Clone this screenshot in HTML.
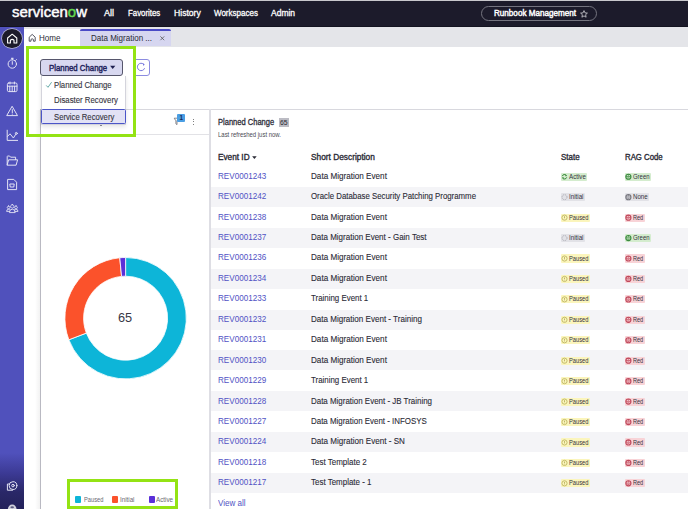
<!DOCTYPE html>
<html><head><meta charset="utf-8">
<style>
html,body{margin:0;padding:0;}
body{width:688px;height:509px;overflow:hidden;position:relative;background:#fff;font-family:"Liberation Sans",sans-serif;}
.a{position:absolute;}
.t{position:absolute;line-height:1;white-space:nowrap;transform-origin:0 0;}
svg{overflow:visible;}
</style></head><body>
<div class="a" style="left:0;top:0;width:688px;height:1px;background:#c8c8cc"></div>
<div class="a" style="left:0;top:1px;width:688px;height:26px;background:#1c1b2b"></div>
<div class="t" style="left:12.30px;top:4.83px;font-size:14.5px;color:#fff;transform:scaleX(1.0336);-webkit-text-stroke:0.45px #fff;">servicen<span style="color:#62d84e;-webkit-text-stroke-color:#62d84e">o</span>w</div>
<div class="t" style="left:103.90px;top:8.58px;font-size:9.0px;color:#fff;transform:scaleX(1.0084);-webkit-text-stroke:0.3px #fff;">All</div>
<div class="t" style="left:127.50px;top:8.58px;font-size:9.0px;color:#fff;transform:scaleX(0.8726);-webkit-text-stroke:0.3px #fff;">Favorites</div>
<div class="t" style="left:173.50px;top:8.58px;font-size:9.0px;color:#fff;transform:scaleX(0.9566);-webkit-text-stroke:0.3px #fff;">History</div>
<div class="t" style="left:213.80px;top:8.58px;font-size:9.0px;color:#fff;transform:scaleX(0.8894);-webkit-text-stroke:0.3px #fff;">Workspaces</div>
<div class="t" style="left:270.80px;top:8.58px;font-size:9.0px;color:#fff;transform:scaleX(0.9445);-webkit-text-stroke:0.3px #fff;">Admin</div>
<div class="a" style="left:481.2px;top:5.7px;width:116px;height:15.7px;border:1px solid #74747f;border-radius:9px;box-sizing:border-box"></div>
<div class="t" style="left:494.00px;top:8.68px;font-size:9.0px;color:#fff;transform:scaleX(0.9005);-webkit-text-stroke:0.45px #fff;">Runbook Management</div>
<svg class="a" style="left:579.5px;top:9.5px" width="8" height="8" viewBox="0 0 8 8"><path d="M4 0.6 L5 2.9 L7.4 3.1 L5.6 4.7 L6.1 7.2 L4 5.9 L1.9 7.2 L2.4 4.7 L0.6 3.1 L3 2.9 Z" fill="none" stroke="#d0d0d6" stroke-width="0.8" stroke-linejoin="round"/></svg>
<div class="a" style="left:0;top:27px;width:24px;height:482px;background:linear-gradient(#5051bc 0px,#5051bc 426px,#3b3993 447px,#2a2868 465px,#23215a 482px)"></div>
<div class="a" style="left:2.4px;top:28.9px;width:19.6px;height:19.6px;border-radius:50%;background:#1c1b2b;box-shadow:0 0 0 0.7px #b8b8d8"></div>
<svg class="a" style="left:0;top:0" width="24" height="509" viewBox="0 0 24 509"><g fill="none" stroke="#e2e2f4" stroke-width="1" stroke-linejoin="round" stroke-linecap="round"><path d="M7.6 43 L7.6 38 L12.2 34.2 L16.8 38 L16.8 43 L14 43 L14 40.2 Q12.2 38.6 10.4 40.2 L10.4 43 Z" stroke="#fff" stroke-width="1.1"/><circle cx="12.3" cy="64" r="4.2"/><path d="M12.3 58.3 L12.3 59.8 M11.4 58.3 L13.2 58.3 M12.3 61.6 L12.3 64.3 M15.6 60.4 L16.4 59.6"/><rect x="7.4" y="83" width="9.6" height="8.6" rx="1.3"/><path d="M7.4 86.2 L17 86.2 M9.8 86.2 L9.8 91.6 M12.2 86.2 L12.2 91.6 M14.6 86.2 L14.6 91.6 M10 82 L10 84 M14.4 82 L14.4 84"/><path d="M12.3 106.6 L17.5 115.6 L7.1 115.6 Z"/><path d="M12.3 109.6 L12.3 112.6 M12.3 114 L12.3 114.2"/><path d="M7.2 130.2 L7.2 140.4 L17.6 140.4"/><path d="M7.4 136.5 L10 133.8 L13.4 138 L15.6 134.5"/><circle cx="16.3" cy="133.4" r="1"/><path d="M7.2 164.8 L7.2 156.6 Q7.2 156 7.8 156 L9.6 156 L10.6 157.2 L15.6 157.2 L15.6 159.6 M7.2 164.8 L8.6 159.8 L17.6 159.8 L16.2 164.8 Z"/><path d="M8 179.4 L13.8 179.4 L16.6 182.2 L16.6 189.6 L8 189.6 Z"/><path d="M10.2 184 L14.2 184 L13.8 187 L10.6 187 Z"/><path d="M12.3 204.6 a1.75 1.75 0 1 0 0.01 0 Z M8.6 206 a1.4 1.4 0 1 0 0.01 0 Z M16 206 a1.4 1.4 0 1 0 0.01 0 Z" stroke-width="0.9"/><path d="M9.4 212.2 Q9.4 209.2 12.3 209.2 Q15.2 209.2 15.2 212.2 Z M9.6 211.4 L6.6 211.4 Q6.7 209.2 8.6 209.2 Q9.5 209.2 10 209.6 M15 211.4 L18 211.4 Q17.9 209.2 16 209.2 Q15.1 209.2 14.6 209.6" stroke-width="0.9"/><circle cx="13" cy="485.6" r="3.9"/><path d="M9.3 484 L7.4 484 L7.4 490.2 L12.6 490.2"/><circle cx="13" cy="485.6" r="1.3"/></g><ellipse cx="12.2" cy="509.5" rx="4.4" ry="5" fill="#d0d0dc"/><ellipse cx="12.2" cy="507.2" rx="1.8" ry="1" fill="#5a5a80"/></svg>
<div class="a" style="left:24px;top:27px;width:664px;height:19.5px;background:#e4e5e9"></div>
<div class="a" style="left:0;top:25.6px;width:688px;height:1.4px;background:#131320"></div>
<div class="a" style="left:24px;top:29px;width:56px;height:17.5px;background:#fff"></div>
<div class="a" style="left:80.1px;top:28.8px;width:91.1px;height:17.7px;background:#d6d6f0;border-top:2.1px solid #4a4ac6;box-sizing:border-box;border-radius:2px 2px 0 0"></div>
<svg class="a" style="left:0;top:0" width="40" height="46"><path d="M29.2 41.2 L29.2 37.2 L32.2 34.4 L35.2 37.2 L35.2 41.2 L33.4 41.2 L33.4 39.4 Q32.2 38.2 31 39.4 L31 41.2 Z" fill="none" stroke="#555560" stroke-width="1" stroke-linejoin="round"/></svg>
<div class="t" style="left:38.60px;top:33.62px;font-size:8.6px;color:#2a2a35;transform:scaleX(0.9373);">Home</div>
<div class="t" style="left:90.50px;top:33.52px;font-size:8.6px;color:#2a2a35;transform:scaleX(0.9322);">Data Migration ...</div>
<svg class="a" style="left:159.6px;top:36.4px" width="5" height="5"><path d="M0.4 0.4 L4.2 4.2 M4.2 0.4 L0.4 4.2" stroke="#555" stroke-width="0.8"/></svg>
<div class="a" style="left:133px;top:59.2px;width:16.7px;height:16.4px;border:1px solid #8c8ce0;border-radius:3px;box-sizing:border-box"></div>
<svg class="a" style="left:0;top:0" width="160" height="80"><path d="M143.8 64.4 A3.7 3.7 0 1 0 144.6 68.2" fill="none" stroke="#6a6ad8" stroke-width="0.9"/><path d="M142.6 63.2 L144.6 64.2 L143.6 66.0 Z" fill="#6a6ad8"/></svg>
<div class="a" style="left:40px;top:109px;width:648px;height:1px;background:#d8d8de"></div>
<div class="a" style="left:35px;top:110px;width:5px;height:399px;background:linear-gradient(90deg,rgba(0,0,0,0),rgba(0,0,0,0.05))"></div>
<div class="a" style="left:40px;top:109px;width:1.4px;height:400px;background:#b9b9c2"></div>
<div class="a" style="left:41px;top:134px;width:168px;height:1px;background:#e2e2e6"></div>
<div class="a" style="left:209px;top:109px;width:1.6px;height:400px;background:#dedee4"></div>
<svg class="a" style="left:0;top:0" width="200" height="130"><path d="M174.2 118.2 L178.8 118.2 L177 120.8 L177 124.6 L175.9 123.8 L175.9 120.8 Z" fill="none" stroke="#6c6c74" stroke-width="0.8" stroke-linejoin="round"/></svg>
<div class="a" style="left:177.1px;top:113.8px;width:7.9px;height:7.9px;background:#4a9ee3;border-radius:1px"></div>
<div class="t" style="left:179.50px;top:114.77px;font-size:6.3px;color:#1c2a55;font-weight:bold;">1</div>
<div class="a" style="left:192.6px;top:118.8px;width:1.3px;height:1.3px;background:#555;border-radius:50%"></div>
<div class="a" style="left:192.6px;top:121.2px;width:1.3px;height:1.3px;background:#555;border-radius:50%"></div>
<div class="a" style="left:192.6px;top:123.6px;width:1.3px;height:1.3px;background:#555;border-radius:50%"></div>
<div class="t" style="left:218.40px;top:117.74px;font-size:8.7px;color:#2c2c38;transform:scaleX(0.8682);-webkit-text-stroke:0.3px #2c2c38;">Planned Change</div>
<div class="a" style="left:278.7px;top:118.3px;width:10.1px;height:8.4px;background:#bcbcc4"></div>
<div class="t" style="left:280.30px;top:119.17px;font-size:7.0px;color:#282830;transform:scaleX(0.9747);">65</div>
<div class="t" style="left:218.40px;top:131.54px;font-size:6.8px;color:#4a4a54;transform:scaleX(0.8775);">Last refreshed just now.</div>
<div class="t" style="left:218.40px;top:152.84px;font-size:8.7px;color:#2a2a35;transform:scaleX(0.9481);-webkit-text-stroke:0.35px #2a2a35;">Event ID</div>
<svg class="a" style="left:0;top:0" width="260" height="160"><path d="M252.1 156.3 L256.7 156.3 L254.4 158.9 Z" fill="#2b2b36"/></svg>
<div class="t" style="left:310.90px;top:152.94px;font-size:8.7px;color:#2a2a35;transform:scaleX(0.9574);-webkit-text-stroke:0.35px #2a2a35;">Short Description</div>
<div class="t" style="left:561.00px;top:152.94px;font-size:8.7px;color:#2a2a35;transform:scaleX(0.9164);-webkit-text-stroke:0.35px #2a2a35;">State</div>
<div class="t" style="left:624.60px;top:152.94px;font-size:8.7px;color:#2a2a35;transform:scaleX(0.8973);-webkit-text-stroke:0.35px #2a2a35;">RAG Code</div>
<div class="t" style="left:218.40px;top:171.72px;font-size:8.6px;color:#5052c4;transform:scaleX(0.9425);">REV0001243</div>
<div class="t" style="left:311.00px;top:171.72px;font-size:8.6px;color:#2a2a35;transform:scaleX(0.9458);-webkit-text-stroke:0.1px #2a2a35;">Data Migration Event</div>
<div class="a" style="left:560.6px;top:172.70px;width:26.7px;height:8.1px;background:#d4ecce;border-radius:1px"></div>
<div class="t" style="left:568.90px;top:173.78px;font-size:6.4px;color:#34343e;transform:scaleX(0.9709);">Active</div>
<div class="a" style="left:624.5px;top:172.70px;width:26.7px;height:8.1px;background:#d4ecce;border-radius:1px"></div>
<div class="t" style="left:632.80px;top:173.78px;font-size:6.4px;color:#34343e;transform:scaleX(0.9288);">Green</div>
<div class="a" style="left:210.6px;top:186.94px;width:478px;height:20.04px;background:#f4f4f7"></div>
<div class="t" style="left:218.40px;top:192.16px;font-size:8.6px;color:#5052c4;transform:scaleX(0.9425);">REV0001242</div>
<div class="t" style="left:311.00px;top:192.16px;font-size:8.6px;color:#2a2a35;transform:scaleX(0.9114);-webkit-text-stroke:0.1px #2a2a35;">Oracle Database Security Patching Programme</div>
<div class="a" style="left:560.6px;top:193.14px;width:24px;height:8.1px;background:#e2e2e7;border-radius:1px"></div>
<div class="t" style="left:568.90px;top:194.22px;font-size:6.4px;color:#34343e;transform:scaleX(0.9717);">Initial</div>
<div class="a" style="left:624.5px;top:193.14px;width:24.6px;height:8.1px;background:#e2e2e7;border-radius:1px"></div>
<div class="t" style="left:632.80px;top:194.22px;font-size:6.4px;color:#34343e;transform:scaleX(0.9620);">None</div>
<div class="t" style="left:218.40px;top:212.60px;font-size:8.6px;color:#5052c4;transform:scaleX(0.9425);">REV0001238</div>
<div class="t" style="left:311.00px;top:212.60px;font-size:8.6px;color:#2a2a35;transform:scaleX(0.9458);-webkit-text-stroke:0.1px #2a2a35;">Data Migration Event</div>
<div class="a" style="left:560.6px;top:213.58px;width:29.1px;height:8.1px;background:#fbf5bc;border-radius:1px"></div>
<div class="t" style="left:568.90px;top:214.66px;font-size:6.4px;color:#34343e;transform:scaleX(0.8991);">Paused</div>
<div class="a" style="left:624.5px;top:213.58px;width:20px;height:8.1px;background:#f8d3d7;border-radius:1px"></div>
<div class="t" style="left:632.80px;top:214.66px;font-size:6.4px;color:#34343e;transform:scaleX(0.8692);">Red</div>
<div class="a" style="left:210.6px;top:227.82px;width:478px;height:20.04px;background:#f4f4f7"></div>
<div class="t" style="left:218.40px;top:233.04px;font-size:8.6px;color:#5052c4;transform:scaleX(0.9425);">REV0001237</div>
<div class="t" style="left:311.00px;top:233.04px;font-size:8.6px;color:#2a2a35;transform:scaleX(0.9320);-webkit-text-stroke:0.1px #2a2a35;">Data Migration Event - Gain Test</div>
<div class="a" style="left:560.6px;top:234.02px;width:24px;height:8.1px;background:#e2e2e7;border-radius:1px"></div>
<div class="t" style="left:568.90px;top:235.10px;font-size:6.4px;color:#34343e;transform:scaleX(0.9717);">Initial</div>
<div class="a" style="left:624.5px;top:234.02px;width:26.7px;height:8.1px;background:#d4ecce;border-radius:1px"></div>
<div class="t" style="left:632.80px;top:235.10px;font-size:6.4px;color:#34343e;transform:scaleX(0.9288);">Green</div>
<div class="t" style="left:218.40px;top:253.48px;font-size:8.6px;color:#5052c4;transform:scaleX(0.9425);">REV0001236</div>
<div class="t" style="left:311.00px;top:253.48px;font-size:8.6px;color:#2a2a35;transform:scaleX(0.9458);-webkit-text-stroke:0.1px #2a2a35;">Data Migration Event</div>
<div class="a" style="left:560.6px;top:254.46px;width:29.1px;height:8.1px;background:#fbf5bc;border-radius:1px"></div>
<div class="t" style="left:568.90px;top:255.54px;font-size:6.4px;color:#34343e;transform:scaleX(0.8991);">Paused</div>
<div class="a" style="left:624.5px;top:254.46px;width:20px;height:8.1px;background:#f8d3d7;border-radius:1px"></div>
<div class="t" style="left:632.80px;top:255.54px;font-size:6.4px;color:#34343e;transform:scaleX(0.8692);">Red</div>
<div class="a" style="left:210.6px;top:268.70px;width:478px;height:20.04px;background:#f4f4f7"></div>
<div class="t" style="left:218.40px;top:273.92px;font-size:8.6px;color:#5052c4;transform:scaleX(0.9425);">REV0001234</div>
<div class="t" style="left:311.00px;top:273.92px;font-size:8.6px;color:#2a2a35;transform:scaleX(0.9458);-webkit-text-stroke:0.1px #2a2a35;">Data Migration Event</div>
<div class="a" style="left:560.6px;top:274.90px;width:29.1px;height:8.1px;background:#fbf5bc;border-radius:1px"></div>
<div class="t" style="left:568.90px;top:275.98px;font-size:6.4px;color:#34343e;transform:scaleX(0.8991);">Paused</div>
<div class="a" style="left:624.5px;top:274.90px;width:20px;height:8.1px;background:#f8d3d7;border-radius:1px"></div>
<div class="t" style="left:632.80px;top:275.98px;font-size:6.4px;color:#34343e;transform:scaleX(0.8692);">Red</div>
<div class="t" style="left:218.40px;top:294.36px;font-size:8.6px;color:#5052c4;transform:scaleX(0.9425);">REV0001233</div>
<div class="t" style="left:311.00px;top:294.36px;font-size:8.6px;color:#2a2a35;transform:scaleX(0.9186);-webkit-text-stroke:0.1px #2a2a35;">Training Event 1</div>
<div class="a" style="left:560.6px;top:295.34px;width:29.1px;height:8.1px;background:#fbf5bc;border-radius:1px"></div>
<div class="t" style="left:568.90px;top:296.42px;font-size:6.4px;color:#34343e;transform:scaleX(0.8991);">Paused</div>
<div class="a" style="left:624.5px;top:295.34px;width:20px;height:8.1px;background:#f8d3d7;border-radius:1px"></div>
<div class="t" style="left:632.80px;top:296.42px;font-size:6.4px;color:#34343e;transform:scaleX(0.8692);">Red</div>
<div class="a" style="left:210.6px;top:309.58px;width:478px;height:20.04px;background:#f4f4f7"></div>
<div class="t" style="left:218.40px;top:314.80px;font-size:8.6px;color:#5052c4;transform:scaleX(0.9425);">REV0001232</div>
<div class="t" style="left:311.00px;top:314.80px;font-size:8.6px;color:#2a2a35;transform:scaleX(0.9361);-webkit-text-stroke:0.1px #2a2a35;">Data Migration Event - Training</div>
<div class="a" style="left:560.6px;top:315.78px;width:29.1px;height:8.1px;background:#fbf5bc;border-radius:1px"></div>
<div class="t" style="left:568.90px;top:316.86px;font-size:6.4px;color:#34343e;transform:scaleX(0.8991);">Paused</div>
<div class="a" style="left:624.5px;top:315.78px;width:20px;height:8.1px;background:#f8d3d7;border-radius:1px"></div>
<div class="t" style="left:632.80px;top:316.86px;font-size:6.4px;color:#34343e;transform:scaleX(0.8692);">Red</div>
<div class="t" style="left:218.40px;top:335.24px;font-size:8.6px;color:#5052c4;transform:scaleX(0.9425);">REV0001231</div>
<div class="t" style="left:311.00px;top:335.24px;font-size:8.6px;color:#2a2a35;transform:scaleX(0.9458);-webkit-text-stroke:0.1px #2a2a35;">Data Migration Event</div>
<div class="a" style="left:560.6px;top:336.22px;width:29.1px;height:8.1px;background:#fbf5bc;border-radius:1px"></div>
<div class="t" style="left:568.90px;top:337.30px;font-size:6.4px;color:#34343e;transform:scaleX(0.8991);">Paused</div>
<div class="a" style="left:624.5px;top:336.22px;width:20px;height:8.1px;background:#f8d3d7;border-radius:1px"></div>
<div class="t" style="left:632.80px;top:337.30px;font-size:6.4px;color:#34343e;transform:scaleX(0.8692);">Red</div>
<div class="a" style="left:210.6px;top:350.46px;width:478px;height:20.04px;background:#f4f4f7"></div>
<div class="t" style="left:218.40px;top:355.68px;font-size:8.6px;color:#5052c4;transform:scaleX(0.9425);">REV0001230</div>
<div class="t" style="left:311.00px;top:355.68px;font-size:8.6px;color:#2a2a35;transform:scaleX(0.9458);-webkit-text-stroke:0.1px #2a2a35;">Data Migration Event</div>
<div class="a" style="left:560.6px;top:356.66px;width:29.1px;height:8.1px;background:#fbf5bc;border-radius:1px"></div>
<div class="t" style="left:568.90px;top:357.74px;font-size:6.4px;color:#34343e;transform:scaleX(0.8991);">Paused</div>
<div class="a" style="left:624.5px;top:356.66px;width:20px;height:8.1px;background:#f8d3d7;border-radius:1px"></div>
<div class="t" style="left:632.80px;top:357.74px;font-size:6.4px;color:#34343e;transform:scaleX(0.8692);">Red</div>
<div class="t" style="left:218.40px;top:376.12px;font-size:8.6px;color:#5052c4;transform:scaleX(0.9425);">REV0001229</div>
<div class="t" style="left:311.00px;top:376.12px;font-size:8.6px;color:#2a2a35;transform:scaleX(0.9186);-webkit-text-stroke:0.1px #2a2a35;">Training Event 1</div>
<div class="a" style="left:560.6px;top:377.10px;width:29.1px;height:8.1px;background:#fbf5bc;border-radius:1px"></div>
<div class="t" style="left:568.90px;top:378.18px;font-size:6.4px;color:#34343e;transform:scaleX(0.8991);">Paused</div>
<div class="a" style="left:624.5px;top:377.10px;width:20px;height:8.1px;background:#f8d3d7;border-radius:1px"></div>
<div class="t" style="left:632.80px;top:378.18px;font-size:6.4px;color:#34343e;transform:scaleX(0.8692);">Red</div>
<div class="a" style="left:210.6px;top:391.34px;width:478px;height:20.04px;background:#f4f4f7"></div>
<div class="t" style="left:218.40px;top:396.56px;font-size:8.6px;color:#5052c4;transform:scaleX(0.9425);">REV0001228</div>
<div class="t" style="left:311.00px;top:396.56px;font-size:8.6px;color:#2a2a35;transform:scaleX(0.9245);-webkit-text-stroke:0.1px #2a2a35;">Data Migration Event - JB Training</div>
<div class="a" style="left:560.6px;top:397.54px;width:29.1px;height:8.1px;background:#fbf5bc;border-radius:1px"></div>
<div class="t" style="left:568.90px;top:398.62px;font-size:6.4px;color:#34343e;transform:scaleX(0.8991);">Paused</div>
<div class="a" style="left:624.5px;top:397.54px;width:20px;height:8.1px;background:#f8d3d7;border-radius:1px"></div>
<div class="t" style="left:632.80px;top:398.62px;font-size:6.4px;color:#34343e;transform:scaleX(0.8692);">Red</div>
<div class="t" style="left:218.40px;top:417.00px;font-size:8.6px;color:#5052c4;transform:scaleX(0.9425);">REV0001227</div>
<div class="t" style="left:311.00px;top:417.00px;font-size:8.6px;color:#2a2a35;transform:scaleX(0.9227);-webkit-text-stroke:0.1px #2a2a35;">Data Migration Event - INFOSYS</div>
<div class="a" style="left:560.6px;top:417.98px;width:29.1px;height:8.1px;background:#fbf5bc;border-radius:1px"></div>
<div class="t" style="left:568.90px;top:419.06px;font-size:6.4px;color:#34343e;transform:scaleX(0.8991);">Paused</div>
<div class="a" style="left:624.5px;top:417.98px;width:20px;height:8.1px;background:#f8d3d7;border-radius:1px"></div>
<div class="t" style="left:632.80px;top:419.06px;font-size:6.4px;color:#34343e;transform:scaleX(0.8692);">Red</div>
<div class="a" style="left:210.6px;top:432.22px;width:478px;height:20.04px;background:#f4f4f7"></div>
<div class="t" style="left:218.40px;top:437.44px;font-size:8.6px;color:#5052c4;transform:scaleX(0.9425);">REV0001224</div>
<div class="t" style="left:311.00px;top:437.44px;font-size:8.6px;color:#2a2a35;transform:scaleX(0.9406);-webkit-text-stroke:0.1px #2a2a35;">Data Migration Event - SN</div>
<div class="a" style="left:560.6px;top:438.42px;width:29.1px;height:8.1px;background:#fbf5bc;border-radius:1px"></div>
<div class="t" style="left:568.90px;top:439.50px;font-size:6.4px;color:#34343e;transform:scaleX(0.8991);">Paused</div>
<div class="a" style="left:624.5px;top:438.42px;width:20px;height:8.1px;background:#f8d3d7;border-radius:1px"></div>
<div class="t" style="left:632.80px;top:439.50px;font-size:6.4px;color:#34343e;transform:scaleX(0.8692);">Red</div>
<div class="t" style="left:218.40px;top:457.88px;font-size:8.6px;color:#5052c4;transform:scaleX(0.9425);">REV0001218</div>
<div class="t" style="left:311.00px;top:457.88px;font-size:8.6px;color:#2a2a35;transform:scaleX(0.9295);-webkit-text-stroke:0.1px #2a2a35;">Test Template 2</div>
<div class="a" style="left:560.6px;top:458.86px;width:29.1px;height:8.1px;background:#fbf5bc;border-radius:1px"></div>
<div class="t" style="left:568.90px;top:459.94px;font-size:6.4px;color:#34343e;transform:scaleX(0.8991);">Paused</div>
<div class="a" style="left:624.5px;top:458.86px;width:20px;height:8.1px;background:#f8d3d7;border-radius:1px"></div>
<div class="t" style="left:632.80px;top:459.94px;font-size:6.4px;color:#34343e;transform:scaleX(0.8692);">Red</div>
<div class="a" style="left:210.6px;top:473.10px;width:478px;height:20.04px;background:#f4f4f7"></div>
<div class="t" style="left:218.40px;top:478.32px;font-size:8.6px;color:#5052c4;transform:scaleX(0.9425);">REV0001217</div>
<div class="t" style="left:311.00px;top:478.32px;font-size:8.6px;color:#2a2a35;transform:scaleX(0.9268);-webkit-text-stroke:0.1px #2a2a35;">Test Template - 1</div>
<div class="a" style="left:560.6px;top:479.30px;width:29.1px;height:8.1px;background:#fbf5bc;border-radius:1px"></div>
<div class="t" style="left:568.90px;top:480.38px;font-size:6.4px;color:#34343e;transform:scaleX(0.8991);">Paused</div>
<div class="a" style="left:624.5px;top:479.30px;width:20px;height:8.1px;background:#f8d3d7;border-radius:1px"></div>
<div class="t" style="left:632.80px;top:480.38px;font-size:6.4px;color:#34343e;transform:scaleX(0.8692);">Red</div>
<div class="t" style="left:218.40px;top:498.82px;font-size:8.6px;color:#5052c4;transform:scaleX(0.9332);">View all</div>
<svg class="a" style="left:0;top:0" width="688" height="509"><path d="M125.60 257.50 A60.7 60.7 0 1 1 68.86 339.75 L86.34 333.11 A42.0 42.0 0 1 0 125.60 276.20 Z" fill="#0db5d8" stroke="#fff" stroke-width="0.8" stroke-linejoin="bevel"/><path d="M68.86 339.75 A60.7 60.7 0 0 1 119.78 257.78 L121.57 276.39 A42.0 42.0 0 0 0 86.34 333.11 Z" fill="#fb522b" stroke="#fff" stroke-width="0.8" stroke-linejoin="bevel"/><path d="M119.78 257.78 A60.7 60.7 0 0 1 125.60 257.50 L125.60 276.20 A42.0 42.0 0 0 0 121.57 276.39 Z" fill="#5a2fd8" stroke="#fff" stroke-width="0.8" stroke-linejoin="bevel"/></svg>
<div class="t" style="left:118.30px;top:311.77px;font-size:12.2px;color:#383846;transform:scaleX(1.0470);">65</div>
<div class="a" style="left:75.1px;top:496px;width:6.2px;height:7px;background:#0db5d8;border-radius:1px"></div>
<div class="t" style="left:83.60px;top:496.96px;font-size:6.9px;color:#6a6a72;transform:scaleX(0.8299);">Paused</div>
<div class="a" style="left:112px;top:496px;width:6.2px;height:7px;background:#fb522b;border-radius:1px"></div>
<div class="t" style="left:120.00px;top:496.96px;font-size:6.9px;color:#6a6a72;transform:scaleX(0.9010);">Initial</div>
<div class="a" style="left:148.5px;top:496px;width:6.2px;height:7px;background:#5a2fd8;border-radius:1px"></div>
<div class="t" style="left:156.40px;top:496.96px;font-size:6.9px;color:#6a6a72;transform:scaleX(0.9112);">Active</div>
<svg class="a" style="left:0;top:0" width="688" height="509"><path d="M562.3 176.15 A2.3 2.3 0 0 1 566.4 175.45 M566.7 177.35 A2.3 2.3 0 0 1 562.6 178.05" fill="none" stroke="#3a8a3c" stroke-width="1"/><path d="M565.7 174.15 L567.1 175.95 L565.1 176.15 Z M563.3 179.35 L561.9 177.55 L563.9 177.35 Z" fill="#3a8a3c"/><circle cx="628.4" cy="176.75" r="2.55" fill="none" stroke="#3c8a40" stroke-width="1.1"/><path d="M625.9 176.55 L630.9 176.55 M628.4 174.25 L628.4 175.85 M627.3 177.95 L629.5 177.95" stroke="#3c8a40" stroke-width="0.75"/><circle cx="564.5" cy="197.19" r="2.5" fill="none" stroke="#a8a8b0" stroke-width="0.9" stroke-dasharray="1.2 0.8"/><circle cx="628.4" cy="197.19" r="2.55" fill="none" stroke="#77777f" stroke-width="1.1"/><path d="M625.9 196.99 L630.9 196.99 M628.4 194.69 L628.4 196.29 M627.3 198.39 L629.5 198.39" stroke="#77777f" stroke-width="0.75"/><circle cx="564.5" cy="217.63" r="2.6" fill="none" stroke="#c4bc6a" stroke-width="1"/><path d="M564.5 216.23 L564.5 218.03 M564.5 218.73 L564.5 219.13" stroke="#b0a850" stroke-width="0.8"/><circle cx="628.4" cy="217.63" r="2.55" fill="none" stroke="#c04a5c" stroke-width="1.1"/><path d="M625.9 217.43 L630.9 217.43 M628.4 215.13 L628.4 216.73 M627.3 218.82999999999998 L629.5 218.82999999999998" stroke="#c04a5c" stroke-width="0.75"/><circle cx="564.5" cy="238.07" r="2.5" fill="none" stroke="#a8a8b0" stroke-width="0.9" stroke-dasharray="1.2 0.8"/><circle cx="628.4" cy="238.07" r="2.55" fill="none" stroke="#3c8a40" stroke-width="1.1"/><path d="M625.9 237.87 L630.9 237.87 M628.4 235.57 L628.4 237.17 M627.3 239.26999999999998 L629.5 239.26999999999998" stroke="#3c8a40" stroke-width="0.75"/><circle cx="564.5" cy="258.51" r="2.6" fill="none" stroke="#c4bc6a" stroke-width="1"/><path d="M564.5 257.11 L564.5 258.90999999999997 M564.5 259.61 L564.5 260.01" stroke="#b0a850" stroke-width="0.8"/><circle cx="628.4" cy="258.51" r="2.55" fill="none" stroke="#c04a5c" stroke-width="1.1"/><path d="M625.9 258.31 L630.9 258.31 M628.4 256.01 L628.4 257.61 M627.3 259.71 L629.5 259.71" stroke="#c04a5c" stroke-width="0.75"/><circle cx="564.5" cy="278.95" r="2.6" fill="none" stroke="#c4bc6a" stroke-width="1"/><path d="M564.5 277.55 L564.5 279.34999999999997 M564.5 280.05 L564.5 280.45" stroke="#b0a850" stroke-width="0.8"/><circle cx="628.4" cy="278.95" r="2.55" fill="none" stroke="#c04a5c" stroke-width="1.1"/><path d="M625.9 278.75 L630.9 278.75 M628.4 276.45 L628.4 278.05 M627.3 280.15 L629.5 280.15" stroke="#c04a5c" stroke-width="0.75"/><circle cx="564.5" cy="299.39" r="2.6" fill="none" stroke="#c4bc6a" stroke-width="1"/><path d="M564.5 297.99 L564.5 299.78999999999996 M564.5 300.49 L564.5 300.89" stroke="#b0a850" stroke-width="0.8"/><circle cx="628.4" cy="299.39" r="2.55" fill="none" stroke="#c04a5c" stroke-width="1.1"/><path d="M625.9 299.19 L630.9 299.19 M628.4 296.89 L628.4 298.49 M627.3 300.59 L629.5 300.59" stroke="#c04a5c" stroke-width="0.75"/><circle cx="564.5" cy="319.83000000000004" r="2.6" fill="none" stroke="#c4bc6a" stroke-width="1"/><path d="M564.5 318.43000000000006 L564.5 320.23 M564.5 320.93000000000006 L564.5 321.33000000000004" stroke="#b0a850" stroke-width="0.8"/><circle cx="628.4" cy="319.83000000000004" r="2.55" fill="none" stroke="#c04a5c" stroke-width="1.1"/><path d="M625.9 319.63000000000005 L630.9 319.63000000000005 M628.4 317.33000000000004 L628.4 318.93000000000006 M627.3 321.03000000000003 L629.5 321.03000000000003" stroke="#c04a5c" stroke-width="0.75"/><circle cx="564.5" cy="340.27" r="2.6" fill="none" stroke="#c4bc6a" stroke-width="1"/><path d="M564.5 338.87 L564.5 340.66999999999996 M564.5 341.37 L564.5 341.77" stroke="#b0a850" stroke-width="0.8"/><circle cx="628.4" cy="340.27" r="2.55" fill="none" stroke="#c04a5c" stroke-width="1.1"/><path d="M625.9 340.07 L630.9 340.07 M628.4 337.77 L628.4 339.37 M627.3 341.46999999999997 L629.5 341.46999999999997" stroke="#c04a5c" stroke-width="0.75"/><circle cx="564.5" cy="360.71000000000004" r="2.6" fill="none" stroke="#c4bc6a" stroke-width="1"/><path d="M564.5 359.31000000000006 L564.5 361.11 M564.5 361.81000000000006 L564.5 362.21000000000004" stroke="#b0a850" stroke-width="0.8"/><circle cx="628.4" cy="360.71000000000004" r="2.55" fill="none" stroke="#c04a5c" stroke-width="1.1"/><path d="M625.9 360.51000000000005 L630.9 360.51000000000005 M628.4 358.21000000000004 L628.4 359.81000000000006 M627.3 361.91 L629.5 361.91" stroke="#c04a5c" stroke-width="0.75"/><circle cx="564.5" cy="381.15" r="2.6" fill="none" stroke="#c4bc6a" stroke-width="1"/><path d="M564.5 379.75 L564.5 381.54999999999995 M564.5 382.25 L564.5 382.65" stroke="#b0a850" stroke-width="0.8"/><circle cx="628.4" cy="381.15" r="2.55" fill="none" stroke="#c04a5c" stroke-width="1.1"/><path d="M625.9 380.95 L630.9 380.95 M628.4 378.65 L628.4 380.25 M627.3 382.34999999999997 L629.5 382.34999999999997" stroke="#c04a5c" stroke-width="0.75"/><circle cx="564.5" cy="401.59000000000003" r="2.6" fill="none" stroke="#c4bc6a" stroke-width="1"/><path d="M564.5 400.19000000000005 L564.5 401.99 M564.5 402.69000000000005 L564.5 403.09000000000003" stroke="#b0a850" stroke-width="0.8"/><circle cx="628.4" cy="401.59000000000003" r="2.55" fill="none" stroke="#c04a5c" stroke-width="1.1"/><path d="M625.9 401.39000000000004 L630.9 401.39000000000004 M628.4 399.09000000000003 L628.4 400.69000000000005 M627.3 402.79 L629.5 402.79" stroke="#c04a5c" stroke-width="0.75"/><circle cx="564.5" cy="422.03000000000003" r="2.6" fill="none" stroke="#c4bc6a" stroke-width="1"/><path d="M564.5 420.63000000000005 L564.5 422.43 M564.5 423.13000000000005 L564.5 423.53000000000003" stroke="#b0a850" stroke-width="0.8"/><circle cx="628.4" cy="422.03000000000003" r="2.55" fill="none" stroke="#c04a5c" stroke-width="1.1"/><path d="M625.9 421.83000000000004 L630.9 421.83000000000004 M628.4 419.53000000000003 L628.4 421.13000000000005 M627.3 423.23 L629.5 423.23" stroke="#c04a5c" stroke-width="0.75"/><circle cx="564.5" cy="442.47" r="2.6" fill="none" stroke="#c4bc6a" stroke-width="1"/><path d="M564.5 441.07000000000005 L564.5 442.87 M564.5 443.57000000000005 L564.5 443.97" stroke="#b0a850" stroke-width="0.8"/><circle cx="628.4" cy="442.47" r="2.55" fill="none" stroke="#c04a5c" stroke-width="1.1"/><path d="M625.9 442.27000000000004 L630.9 442.27000000000004 M628.4 439.97 L628.4 441.57000000000005 M627.3 443.67 L629.5 443.67" stroke="#c04a5c" stroke-width="0.75"/><circle cx="564.5" cy="462.91" r="2.6" fill="none" stroke="#c4bc6a" stroke-width="1"/><path d="M564.5 461.51000000000005 L564.5 463.31 M564.5 464.01000000000005 L564.5 464.41" stroke="#b0a850" stroke-width="0.8"/><circle cx="628.4" cy="462.91" r="2.55" fill="none" stroke="#c04a5c" stroke-width="1.1"/><path d="M625.9 462.71000000000004 L630.9 462.71000000000004 M628.4 460.41 L628.4 462.01000000000005 M627.3 464.11 L629.5 464.11" stroke="#c04a5c" stroke-width="0.75"/><circle cx="564.5" cy="483.35" r="2.6" fill="none" stroke="#c4bc6a" stroke-width="1"/><path d="M564.5 481.95000000000005 L564.5 483.75 M564.5 484.45000000000005 L564.5 484.85" stroke="#b0a850" stroke-width="0.8"/><circle cx="628.4" cy="483.35" r="2.55" fill="none" stroke="#c04a5c" stroke-width="1.1"/><path d="M625.9 483.15000000000003 L630.9 483.15000000000003 M628.4 480.85 L628.4 482.45000000000005 M627.3 484.55 L629.5 484.55" stroke="#c04a5c" stroke-width="0.75"/></svg>
<div class="a" style="left:99.6px;top:124.7px;width:2.6px;height:1.3px;background:#6a6a78;border-radius:0 0 1px 1px"></div>
<div class="a" style="left:40.3px;top:59.2px;width:82.5px;height:16.5px;background:#d8d8f0;border:1px solid #56566c;border-radius:3px;box-sizing:border-box"></div>
<div class="t" style="left:49.00px;top:63.55px;font-size:8.8px;color:#20215a;transform:scaleX(0.8879);-webkit-text-stroke:0.4px #20215a;">Planned Change</div>
<svg class="a" style="left:0;top:0" width="130" height="80"><path d="M110.1 65.8 L115.3 65.8 L112.7 69.1 Z" fill="#1f2050"/></svg>
<div class="a" style="left:40.5px;top:75.6px;width:85.5px;height:49px;background:#fff;border:1px solid #d4d4dc;border-top:none;box-sizing:border-box;box-shadow:0 2px 4px rgba(0,0,0,0.10)"></div>
<svg class="a" style="left:0;top:0" width="130" height="130"><path d="M46.2 85.4 L48 87.3 L51.6 82.2" fill="none" stroke="#58a3a0" stroke-width="0.9"/></svg>
<div class="t" style="left:54.30px;top:80.60px;font-size:8.5px;color:#34343e;transform:scaleX(0.9093);-webkit-text-stroke:0.12px #34343e;">Planned Change</div>
<div class="t" style="left:54.30px;top:96.10px;font-size:8.5px;color:#34343e;transform:scaleX(0.9203);-webkit-text-stroke:0.12px #34343e;">Disaster Recovery</div>
<div class="a" style="left:40.9px;top:108.8px;width:85.1px;height:15.6px;background:#e2e2f5;border:1.5px solid #4b55c8;box-sizing:border-box;border-radius:1.5px"></div>
<div class="t" style="left:54.30px;top:112.80px;font-size:8.5px;color:#34343e;transform:scaleX(0.9053);-webkit-text-stroke:0.12px #34343e;">Service Recovery</div>
<div class="a" style="left:26px;top:46px;width:110px;height:91px;border:3px solid #94e314;box-sizing:border-box"></div>
<div class="a" style="left:66.6px;top:479.2px;width:111.6px;height:30px;border:3.2px solid #94e314;box-sizing:border-box"></div>
</body></html>
